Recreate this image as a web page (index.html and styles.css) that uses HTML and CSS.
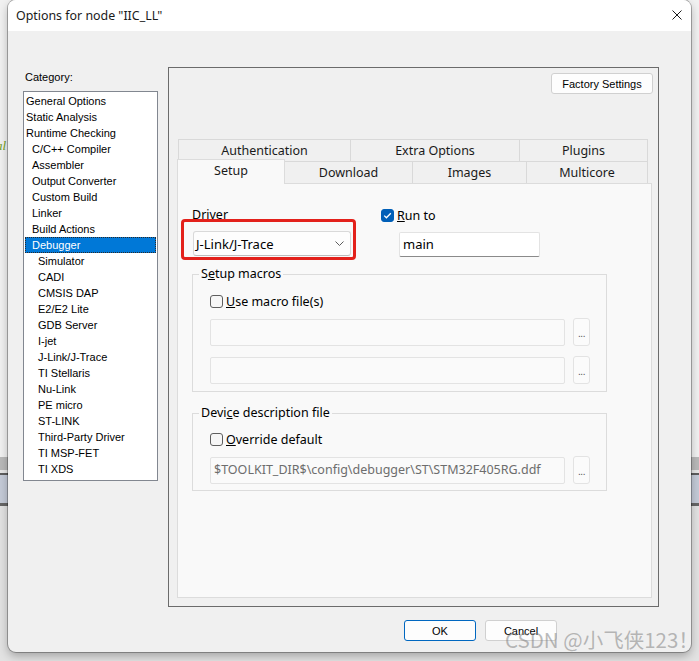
FILE: index.html
```html
<!DOCTYPE html>
<html>
<head>
<meta charset="utf-8">
<title>Options for node "IIC_LL"</title>
<link rel="stylesheet" href="styles.css">
</head>
<body>
<span class="bg-code">al</span>
<div class="dialog">
  <div class="titlebar">
    <span class="title">Options for node "IIC_LL"</span>
    <svg class="close" width="10" height="10" viewBox="0 0 10 10"><path d="M0.5 0.5L9.5 9.5M9.5 0.5L0.5 9.5" stroke="#1b1b1b" stroke-width="1" fill="none"/></svg>
  </div>
  <div class="dlg-body">
    <div class="main">
      <div class="catcol">
        <div class="catlabel">Category:</div>
        <ul class="catlist">
          <li class="l0">General Options</li>
          <li class="l0">Static Analysis</li>
          <li class="l0">Runtime Checking</li>
          <li class="l1">C/C++ Compiler</li>
          <li class="l1">Assembler</li>
          <li class="l1">Output Converter</li>
          <li class="l1">Custom Build</li>
          <li class="l1">Linker</li>
          <li class="l1">Build Actions</li>
          <li class="l1 sel">Debugger</li>
          <li class="l2">Simulator</li>
          <li class="l2">CADI</li>
          <li class="l2">CMSIS DAP</li>
          <li class="l2">E2/E2 Lite</li>
          <li class="l2">GDB Server</li>
          <li class="l2">I-jet</li>
          <li class="l2">J-Link/J-Trace</li>
          <li class="l2">TI Stellaris</li>
          <li class="l2">Nu-Link</li>
          <li class="l2">PE micro</li>
          <li class="l2">ST-LINK</li>
          <li class="l2">Third-Party Driver</li>
          <li class="l2">TI MSP-FET</li>
          <li class="l2">TI XDS</li>
        </ul>
      </div>
      <div class="frame">
        <div class="factory-row"><div class="btn factory">Factory Settings</div></div>
        <div class="tabs">
          <div class="tabrow">
            <div class="tab w-auth">Authentication</div>
            <div class="tab w-extra">Extra Options</div>
            <div class="tab w-plug">Plugins</div>
          </div>
          <div class="tabrow">
            <div class="tab w-setup active">Setup</div>
            <div class="tab w-down">Download</div>
            <div class="tab w-img">Images</div>
            <div class="tab w-multi">Multicore</div>
          </div>
        </div>
        <div class="panel">
          <div class="annot"></div>
          <div class="toprow">
            <div class="drivercol">
              <div class="lbl">Driver</div>
              <div class="combo"><span>J-Link/J-Trace</span><svg class="chev" width="9" height="5" viewBox="0 0 9 5"><path d="M0.5 0.5L4.5 4.5L8.5 0.5" fill="none" stroke="#5c5c5c" stroke-width="1"/></svg></div>
            </div>
            <div class="runcol">
              <div class="check"><span class="box checked"><svg width="11" height="11" viewBox="0 0 11 11"><path d="M2.2 5.6L4.4 7.8L8.8 3.2" fill="none" stroke="#ffffff" stroke-width="1.3"/></svg></span><span><u>R</u>un to</span></div>
              <div class="textbox">main</div>
            </div>
          </div>
          <fieldset class="group g1">
            <legend>S<u>e</u>tup macros</legend>
            <div class="check inner"><span class="box"></span><span><u>U</u>se macro file(s)</span></div>
            <div class="filerow r1"><div class="pathbox"></div><div class="dots">...</div></div>
            <div class="filerow r2"><div class="pathbox"></div><div class="dots">...</div></div>
          </fieldset>
          <fieldset class="group g2">
            <legend>Devi<u>c</u>e description file</legend>
            <div class="check inner"><span class="box"></span><span><u>O</u>verride default</span></div>
            <div class="filerow r3"><div class="pathbox path">$TOOLKIT_DIR$\config\debugger\ST\STM32F405RG.ddf</div><div class="dots">...</div></div>
          </fieldset>
        </div>
      </div>
    </div>
    <div class="buttons">
      <div class="btn ok">OK</div>
      <div class="btn cancel">Cancel</div>
    </div>
  </div>
</div>
<div class="watermark">CSDN @小飞侠123！</div>
</body>
</html>
```
FILE: styles.css
```css
* { box-sizing: border-box; }
html, body { margin: 0; padding: 0; }
body {
  width: 699px;
  height: 661px;
  overflow: hidden;
  position: relative;
  font-family: "Noto Sans", "Liberation Sans", sans-serif;
  color: #000;
  background: linear-gradient(to bottom,
    #f1f1f1 0, #f1f1f1 457px,
    #b9b9b9 457px, #b9b9b9 470px,
    #e6e6e6 470px, #e6e6e6 473px,
    #5d5d5d 473px, #5d5d5d 475px,
    #c4cad7 475px, #c4cad7 503px,
    #666666 503px, #666666 506px,
    #e2e2e2 506px, #e2e2e2 661px);
}
.bg-code {
  position: absolute;
  left: -4px;
  top: 138px;
  font: italic 13px "Liberation Serif", serif;
  color: #6f9d1c;
}
.dialog {
  margin-left: 8px;
  width: 683px;
  height: 652px;
  background: #f0f0f0;
  border-radius: 8px;
  box-shadow: 0 0 0 1px rgba(0,0,0,0.28), 0 4px 10px rgba(0,0,0,0.28);
  display: flex;
  flex-direction: column;
  overflow: hidden;
  position: relative;
}
.titlebar {
  height: 31px;
  background: #ffffff;
  display: flex;
  align-items: center;
  justify-content: space-between;
  padding: 0 9px 1px 8px;
}
.title { font-size: 12.4px; color: #1a1a1a; }
.close { display: block; }
.dlg-body { flex: 1; display: flex; flex-direction: column; }
.main { display: flex; align-items: flex-start; padding: 36px 0 0 15px; }
.catcol { width: 135px; }
.catlabel {
  font: 11px "Liberation Sans", sans-serif;
  line-height: 14px;
  margin-top: 3px;
  padding-left: 2px;
  color: #000;
}
.catlist {
  list-style: none;
  margin: 7px 0 0 0;
  padding: 1px 0 0 0;
  height: 390px;
  background: #ffffff;
  border: 1px solid #828790;
  font: 11px "Liberation Sans", sans-serif;
}
.catlist li {
  height: 16px;
  line-height: 16px;
  margin: 0 1px;
  white-space: nowrap;
  color: #000;
}
.catlist .l0 { padding-left: 1px; }
.catlist .l1 { padding-left: 7px; }
.catlist .l2 { padding-left: 13px; }
.catlist .sel {
  background: #0078d7;
  color: #ffffff;
  outline: 1px dotted #2a2a2a;
  outline-offset: -1px;
}
.frame {
  margin-left: 10px;
  width: 491px;
  height: 540px;
  border: 1px solid #6b6b6b;
  display: flex;
  flex-direction: column;
}
.factory-row { display: flex; justify-content: flex-end; padding: 5px 5px 0 0; }
.btn {
  height: 21px;
  background: #fdfdfd;
  border: 1px solid #d0d0d0;
  border-radius: 3px;
  font: 11px "Liberation Sans", sans-serif;
  display: flex;
  align-items: center;
  justify-content: center;
  color: #000;
}
.factory { width: 102px; }
.tabs { margin: 45px 9px 0 9px; font-size: 12.5px; }
.tabrow { display: flex; height: 22px; align-items: flex-start; }
.tab {
  height: 22px;
  border: 1px solid #d9d9d9;
  border-bottom: none;
  border-right: none;
  background: #f0f0f0;
  display: flex;
  align-items: center;
  justify-content: center;
  color: #1a1a1a;
}
.tab.w-plug, .tab.w-multi { border-right: 1px solid #d9d9d9; }
.w-auth { width: 172px; }
.w-extra { width: 169px; }
.w-plug { width: 129px; }
.w-setup { width: 108px; margin-left: -1px; }
.w-down { width: 127px; }
.w-img { width: 114px; }
.w-multi { width: 122px; }
.tab.active {
  background: #f9f9f9;
  height: 25px;
  margin-top: -2px;
  position: relative;
  z-index: 1;
  border-color: #dcdcdc;
  border-right: 1px solid #dcdcdc;
  padding-bottom: 4px;
}
.tab.active + .tab { border-left: none; }
.panel {
  flex: 1;
  margin: 0 6px 8px 8px;
  background: #f9f9f9;
  border: 1px solid #dcdcdc;
  position: relative;
  font-size: 12.5px;
}
.annot {
  position: absolute;
  left: 3px;
  top: 35px;
  width: 175px;
  height: 41px;
  border: 3px solid #e3211b;
  border-radius: 4px;
}
.toprow { display: flex; padding: 23px 0 0 14px; }
.drivercol { width: 160px; }
.lbl { height: 16px; line-height: 16px; }
.combo {
  margin: 8px 0 0 1px;
  width: 158px;
  height: 25px;
  background: #fdfdfd;
  border: 1px solid #d9d9d9;
  border-bottom-color: #bdbdbd;
  border-radius: 3px;
  display: flex;
  align-items: center;
  justify-content: space-between;
  padding: 0 6px 0 2px;
  font-size: 13px;
}
.chev { display: block; }
.runcol { margin-left: 29px; }
.check { display: flex; align-items: center; height: 16px; white-space: nowrap; }
.box {
  width: 13px;
  height: 13px;
  border: 1px solid #5e5e5e;
  border-radius: 3px;
  background: #f6f6f6;
  margin-right: 3px;
  display: flex;
  align-items: center;
  justify-content: center;
  flex: none;
}
.box.checked { background: #005fb8; border-color: #005fb8; }
.textbox {
  margin: 9px 0 0 18px;
  width: 141px;
  height: 25px;
  background: #ffffff;
  border: 1px solid #e3e3e3;
  border-bottom-color: #8a8a8a;
  border-radius: 2px;
  padding-left: 3px;
  line-height: 23px;
  font-size: 13px;
}
.group {
  margin: 0 0 0 14px;
  width: 415px;
  padding: 0;
  border: 1px solid #dcdcdc;
  min-width: 0;
}
.group legend {
  margin-left: 6px;
  padding: 0 2px;
  line-height: 16px;
}
.g1 { margin-top: 9px; padding-bottom: 7px; }
.g2 { margin-top: 13px; padding-bottom: 6px; }
.check.inner { margin: 11px 0 0 17px; }
.g2 .check.inner { margin-top: 10px; }
.filerow { display: flex; align-items: flex-start; margin-left: 17px; }
.r1 { margin-top: 9px; }
.r2 { margin-top: 10px; }
.r3 { margin-top: 9px; }
.pathbox {
  width: 355px;
  height: 27px;
  margin-top: 1px;
  background: #fafafa;
  border: 1px solid #e3e3e3;
  border-radius: 2px;
}
.path {
  color: #6d6d6d;
  padding-left: 3px;
  line-height: 24px;
  font-size: 12.5px;
  white-space: nowrap;
  overflow: hidden;
}
.dots {
  margin-left: 8px;
  width: 17px;
  height: 28px;
  background: #fbfbfb;
  border: 1px solid #e3e3e3;
  border-radius: 3px;
  font: 10px "Liberation Sans", sans-serif;
  color: #555;
  display: flex;
  align-items: center;
  justify-content: center;
  padding-top: 3px;
  letter-spacing: -0.5px;
}
.buttons { display: flex; padding: 13px 0 0 396px; }
.ok { width: 72px; border-color: #0067c0; }
.cancel { width: 72px; margin-left: 9px; }
.watermark {
  position: absolute;
  left: 505px;
  top: 625px;
  font-family: "Noto Sans CJK SC", sans-serif;
  font-size: 20.5px;
  line-height: 28px;
  color: rgba(120, 120, 120, 0.5);
  white-space: nowrap;
}
```
